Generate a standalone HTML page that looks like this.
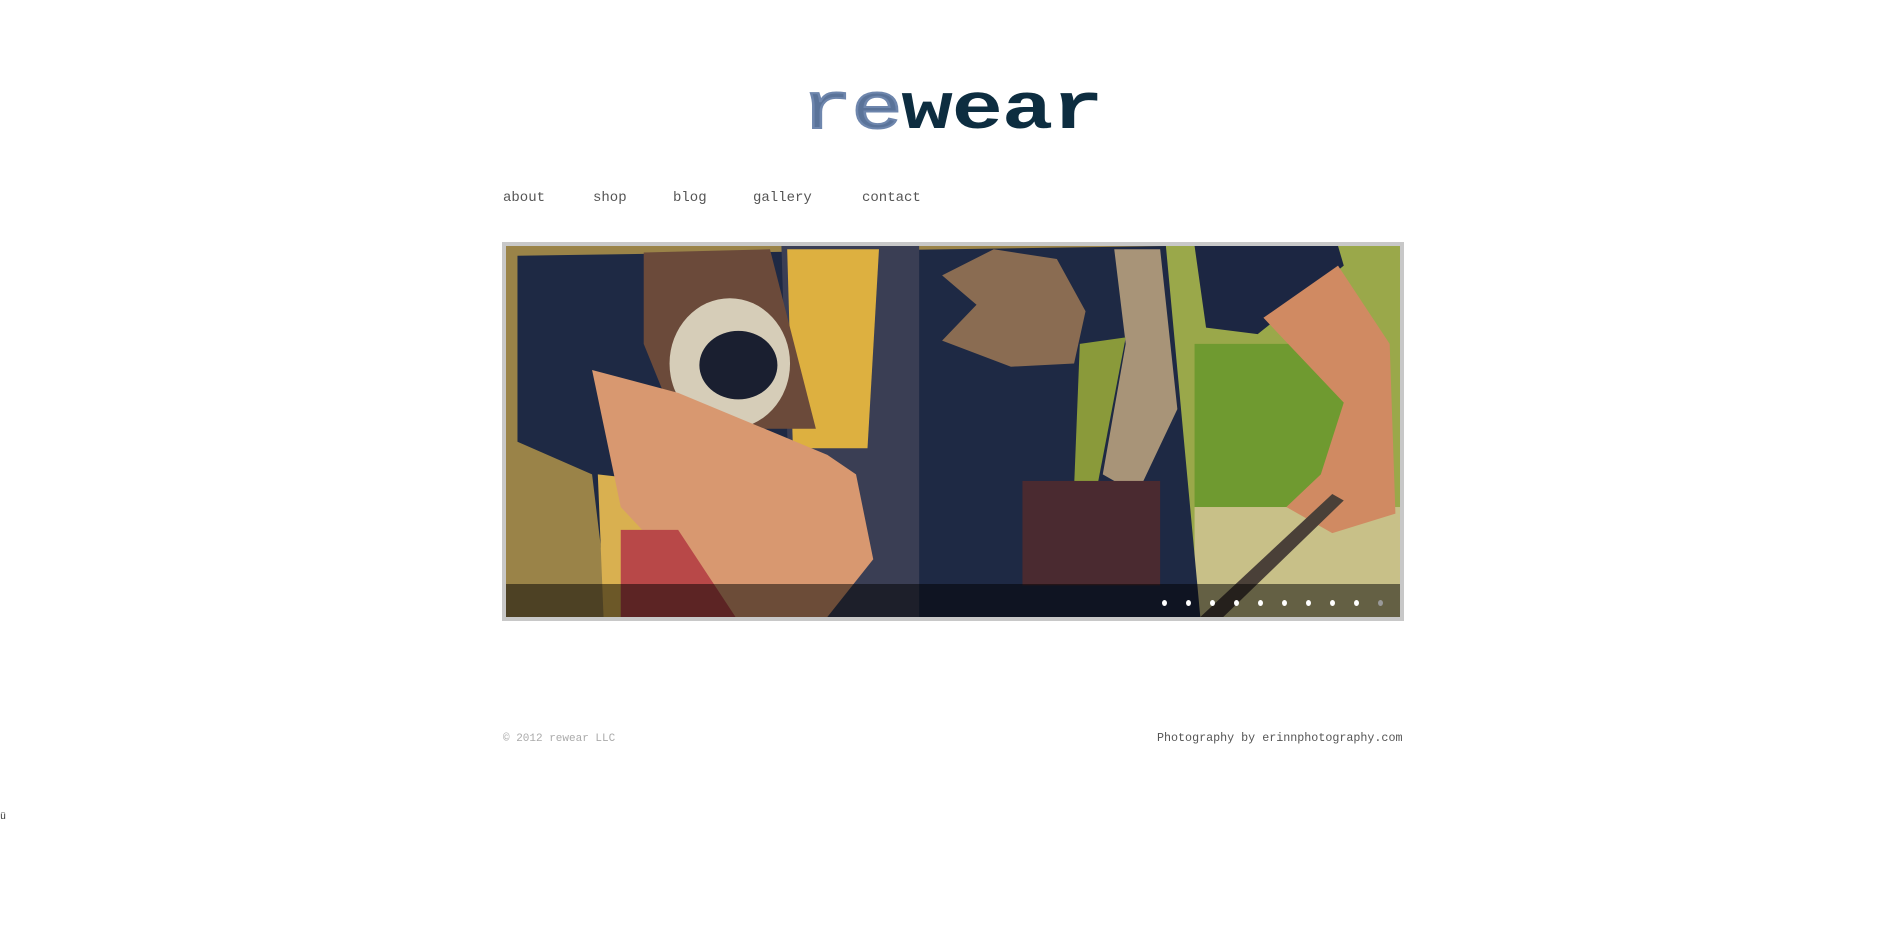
<!DOCTYPE html>
<html><head><meta charset="utf-8"><style>
html,body{margin:0;padding:0;background:#fff;width:1904px;height:925px;overflow:hidden;position:relative;font-family:"Liberation Mono",monospace}
.logo{position:absolute;left:801px;top:78px;font-family:"Liberation Mono",monospace;font-weight:bold;font-size:66px;line-height:66px;color:#0d2d40;letter-spacing:-1px;transform:scaleX(1.3);transform-origin:0 0}
.logo .re{color:#5a7399;-webkit-text-stroke:2px #6e86ad;font-weight:normal}
.nav{position:absolute;top:190px;font-size:14px;color:#555}
.slide{position:absolute;left:502px;top:242px;width:894px;height:371px;border:4px solid #c8c8c8;overflow:hidden}
.bar{position:absolute;left:0;top:338px;width:894px;height:36px;background:rgba(0,0,0,.5)}
.dot{position:absolute;top:354px;width:5px;height:6px;border-radius:50%;background:#fff}
.foot{position:absolute;top:733px;font-size:11px}
</style></head><body>
<div class="logo"><span class="re">re</span>wear</div>
<div class="nav" style="left:503px">about</div>
<div class="nav" style="left:593px">shop</div>
<div class="nav" style="left:673px">blog</div>
<div class="nav" style="left:753px">gallery</div>
<div class="nav" style="left:862px">contact</div>
<div class="slide">
<svg width="894" height="371" viewBox="0 0 1558 1137" preserveAspectRatio="none" style="display:block">
<rect width="1558" height="1137" fill="#9a8348"/>
<rect x="1150" width="408" height="1137" fill="#9aa84a"/>
<rect x="1200" y="300" width="300" height="500" fill="#6f9a30"/>
<rect x="1200" y="800" width="358" height="337" fill="#c8c088"/>
<polygon points="20,30 1150,0 1210,1137 180,1137 150,700 20,600" fill="#1e2944"/>
<polygon points="480,0 720,0 720,1137 500,1137" fill="#3a3e54"/>
<polygon points="490,10 650,10 630,620 500,620" fill="#ddb040"/>
<polygon points="160,700 260,720 260,1137 170,1137" fill="#d9b050"/>
<polygon points="240,20 460,10 540,560 300,560 240,300" fill="#6b4a3a"/>
<ellipse cx="390" cy="360" rx="105" ry="200" fill="#d6cdb8"/>
<ellipse cx="405" cy="365" rx="68" ry="105" fill="#1a1f30"/>
<polygon points="150,380 300,450 560,640 610,700 640,960 560,1137 380,1137 200,800" fill="#d89870"/>
<polygon points="200,870 300,870 400,1137 200,1137" fill="#b84848"/>
<polygon points="760,90 850,10 960,40 1010,200 990,360 880,370 760,290 820,180" fill="#8a6c52"/>
<polygon points="1060,10 1140,10 1170,500 1100,760 1040,700 1080,300" fill="#a89478"/>
<polygon points="1000,300 1080,280 1030,740 990,740" fill="#8a9a3a"/>
<rect x="900" y="720" width="240" height="320" fill="#4a2a30"/>
<polygon points="1200,0 1450,0 1460,60 1310,270 1220,250" fill="#1c2642"/>
<polygon points="1320,220 1450,60 1540,300 1550,820 1440,880 1360,800 1420,700 1460,480" fill="#d08a62"/>
<polygon points="1440,760 1460,780 1250,1137 1210,1137" fill="#4a4038"/>
</svg>
<div class="bar"></div>
<div class="dot" style="left:656px"></div>
<div class="dot" style="left:680px"></div>
<div class="dot" style="left:704px"></div>
<div class="dot" style="left:728px"></div>
<div class="dot" style="left:752px"></div>
<div class="dot" style="left:776px"></div>
<div class="dot" style="left:800px"></div>
<div class="dot" style="left:824px"></div>
<div class="dot" style="left:848px"></div>
<div class="dot" style="left:872px;background:#999"></div>
</div>
<div class="foot" style="left:503px;color:#aaa">© 2012 rewear LLC</div>
<div class="foot" style="left:1157px;color:#555;top:731px;font-size:11.7px">Photography by erinnphotography.com</div>
<div style="position:absolute;left:0;top:812px;font-size:10px;color:#333">ü</div>
</body></html>
